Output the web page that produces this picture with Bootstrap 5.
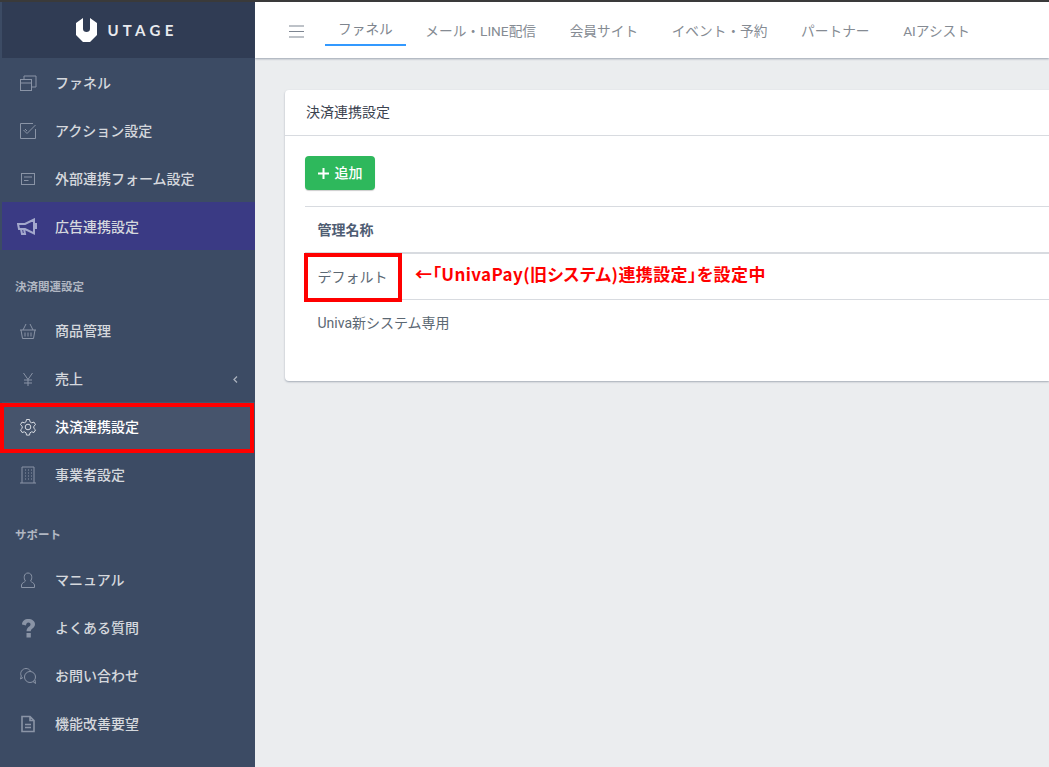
<!DOCTYPE html>
<html lang="ja">
<head>
<meta charset="utf-8">
<title>決済連携設定</title>
<link rel="stylesheet" href="https://cdn.jsdelivr.net/npm/bootstrap@5.3.0/dist/css/bootstrap.min.css">
<style>
html,body{height:100%;overflow:hidden}
body{font-family:"Roboto","Noto Sans CJK JP",sans-serif;background:#ebedef;color:#495057;font-size:14px}
.top-strip{height:2px;background:#3a3a3a}
.app-shell{height:765px}
.side-edge{width:2px;background:#3c4b64}
.side-col{width:253px;background:#3c4b64;color:#d3d6dc}
.brand-box{height:56px;background:#303c54;padding-right:3px}
.brand-word{font-family:"Lato","Liberation Sans",sans-serif;font-weight:700;font-size:15px;letter-spacing:4.3px;color:#e8eaee;margin-left:10px}
.side-link{height:48px;padding-left:17px;padding-top:2px;font-size:14px;font-weight:500;color:#d5d8dd;text-decoration:none}
.side-link .nav-glyph{width:18px;height:18px;margin-right:18px;flex:none;color:#8a94a6}
.side-link.on-ad{background:#3a3a84}
.side-link.on-ad .nav-glyph{color:#a3a8cc;width:20px;margin-left:-2px}
.side-link .nav-glyph.tall{height:20px}
.side-link.on-cur{background:#46546c;color:#fff;position:relative}
.side-link.on-cur .nav-glyph{color:#d7dbe1}
.cur-frame{position:absolute;left:-2px;right:1px;top:1px;bottom:-3px;border:4px solid #f00}
.side-head{height:56px;padding:19px 0 0 13px;font-size:11.5px;font-weight:700;color:#b1b7c2}
.side-head.lower{height:57px}
.chev{margin-left:auto;margin-right:17px;color:#aab1bd;width:5px;height:7px}
.main-col{min-width:0}
.head-bar{height:56px;background:#fff;box-shadow:0 1px 2px rgba(60,75,100,.45);padding-left:34px}
.burger{width:15px;height:13px;margin-right:21px;margin-top:3px;color:#7d8591}
.head-tab{font-size:13.7px;color:#858b93;padding:0 13px;height:32px;display:flex;align-items:center;margin-right:7.6px;text-decoration:none;margin-top:2px}
.head-tab.act{border-bottom:2px solid #39f;color:#7e858e;padding-bottom:3px;margin-top:3px;height:29px;margin-right:6.5px}
.pane{padding:32px 0 0 30px}
.sheet{border:0;border-radius:4px 0 0 4px;box-shadow:0 1px 2px rgba(60,75,100,.4);height:291px;background:#fff}
.sheet-head{height:46px;padding:0 21px;border-bottom:1px solid #d8dbe0;display:flex;align-items:center;color:#3c4350;font-size:14px}
.sheet-body{padding:20px 0 20px 20px}
.btn-add{background:#2eb85c;color:#fff;border:0;font-size:14px;font-weight:500;height:34px;width:70px;padding:0;border-radius:4px;box-shadow:0 1px 1px rgba(0,0,0,.2)}
.btn-add:hover{background:#2eb85c;color:#fff}
.btn-add svg{width:11px;height:11px;margin-right:6px;vertical-align:-1px}
.name-table{margin:16px 0 0;width:100%;font-size:14px;color:#5c6873;border-collapse:collapse}
.name-table th{font-weight:700;height:46px;padding:2px 12.5px 0;border-top:1px solid #d8dbe0;border-bottom:2px solid #d8dbe0;color:#4f5d73;vertical-align:middle}
.name-table td{height:47px;padding:0 12.5px;border-bottom:1px solid #d8dbe0;vertical-align:middle}
.name-table td.cell-mark{padding-top:2px}
.name-table tr:last-child td{border-bottom:0}
.cell-mark{position:relative}
.mark-frame{position:absolute;left:-1px;top:-1px;width:98px;height:49px;border:4px solid #f00}
.note-red{position:absolute;left:110px;top:10px;white-space:nowrap;color:#f00;font-size:17px;font-weight:700;letter-spacing:.4px;font-feature-settings:"palt";font-family:"Noto Sans CJK JP",sans-serif;line-height:20px}
</style>
</head>
<body>
<div class="top-strip"></div>
<div class="d-flex app-shell">
  <div class="side-edge"></div>
  <nav class="side-col d-flex flex-column flex-shrink-0">
    <div class="brand-box d-flex align-items-center justify-content-center">
      <svg width="21" height="24" viewBox="0 0 21 24"><path fill="#fff" d="M7 0 0 5v12l7 7h7l7-7V5l-7-5v11c0 2-1.500 3-3.500 3S7 13 7 11z"/></svg>
      <span class="brand-word">UTAGE</span>
    </div>
    <a class="side-link d-flex align-items-center"><svg class="nav-glyph" viewBox="0 0 18 18" fill="none" stroke="currentColor"><rect x="1.500" y="5.500" width="11" height="11"/><path d="M1.500 9h11M5 5.500V2h12v11h-4.500M5 5.500h7.500"/></svg>ファネル</a>
    <a class="side-link d-flex align-items-center"><svg class="nav-glyph" viewBox="0 0 18 18" fill="none" stroke="currentColor"><path d="M16.500 7v9.500h-15v-15H14"/><path d="m4.500 8 3.500 3.500L16.500 3M6 7l2 2"/></svg>アクション設定</a>
    <a class="side-link d-flex align-items-center"><svg class="nav-glyph" viewBox="0 0 18 18" fill="none" stroke="currentColor"><rect x="2.500" y="3.500" width="13" height="11"/><path d="M5 7h8M5 10.500h4.500"/></svg>外部連携フォーム設定</a>
    <a class="side-link on-ad d-flex align-items-center"><svg class="nav-glyph" viewBox="0 0 20 18" fill="none" stroke="currentColor" stroke-width="2"><path d="M1 6h7l9-4.500v14L8 11H2zM4 11l1 5h3l-1-5M17 6h2v4h-2"/></svg>広告連携設定</a>
    <div class="side-head d-flex align-items-center">決済関連設定</div>
    <a class="side-link d-flex align-items-center"><svg class="nav-glyph" viewBox="0 0 18 18" fill="none" stroke="currentColor"><path d="M1 8h16M2 8l1.500 8.500h11L16 8M4 8l3-6M14 8l-3-6M6 10.500v4M9 10.500v4M12 10.500v4"/></svg>商品管理</a>
    <a class="side-link d-flex align-items-center"><svg class="nav-glyph" viewBox="0 0 18 18" fill="none" stroke="currentColor"><path d="m4.500 3 4.500 6.500L13.500 3M9 9.500V16M5 10h8M5 13h8"/></svg>売上<svg class="chev" viewBox="0 0 5 7" fill="none" stroke="currentColor" stroke-width="1.300"><path d="M4 .5 1 3.500l3 3"/></svg></a>
    <a class="side-link on-cur d-flex align-items-center"><svg class="nav-glyph" viewBox="0 0 18 18" fill="none" stroke="currentColor"><path d="M7.500 1.500h3l.5 2.300 1.700 1 2.300-.7 1.500 2.600-1.700 1.600v2l1.700 1.600-1.500 2.600-2.300-.7-1.700 1-.5 2.300h-3l-.5-2.300-1.700-1-2.300.7-1.500-2.600 1.700-1.600v-2L1.500 6.700 3 4.100l2.300.7 1.700-1z"/><circle cx="9" cy="9" r="2.800"/></svg>決済連携設定<span class="cur-frame"></span></a>
    <a class="side-link d-flex align-items-center"><svg class="nav-glyph" viewBox="0 0 18 18" fill="none" stroke="currentColor"><path d="M3 17V1h12v16M1 17h16M6 4h1M9 4h1M12 4h1M6 7h1M9 7h1M12 7h1M6 10h1M9 10h1M12 10h1M6 13h1M9 13h1M12 13h1"/></svg>事業者設定</a>
    <div class="side-head lower d-flex align-items-center">サポート</div>
    <a class="side-link d-flex align-items-center"><svg class="nav-glyph" viewBox="0 0 18 18" fill="none" stroke="currentColor"><path d="M2.500 16.500h13v-2.500c0-2-3.500-3-4-4 2-2 2-8-2.500-8s-4.500 6-2.500 8c-.5 1-4 2-4 4z"/></svg>マニュアル</a>
    <a class="side-link d-flex align-items-center"><svg class="nav-glyph tall" viewBox="0 0 18 20" fill="currentColor"><path d="M3 6.500C3 3 5.800 1 9.300 1 13 1 16 3 16 6.300c0 4-4.200 4-4.200 7H7.500c0-4.500 4-4.500 4-6.800 0-1.200-.9-1.900-2.100-1.900-1.400 0-2.200 1-2.400 2.900zM7.500 15h4.300v4.500H7.500z"/></svg>よくある質問</a>
    <a class="side-link d-flex align-items-center"><svg class="nav-glyph" viewBox="0 0 18 18" fill="none" stroke="currentColor"><path d="M4 10.500 1.500 12l.8-3C.5 6 3 1.500 7 1.500c2 0 3.500 1 4.500 2.500"/><circle cx="11" cy="10" r="5.500"/><path d="m14 14.500 2.500 2-.5-3.500"/></svg>お問い合わせ</a>
    <a class="side-link d-flex align-items-center"><svg class="nav-glyph" viewBox="0 0 18 18" fill="none" stroke="currentColor" stroke-width="1.600"><path d="M3 1.500h8l4 4v11H3zM11 1.500v4h4M6 9.500h6M6 12.500h6"/></svg>機能改善要望</a>
  </nav>
  <main class="main-col flex-grow-1">
    <header class="head-bar d-flex align-items-center">
      <svg class="burger" viewBox="0 0 15 13" fill="none" stroke="currentColor"><path d="M0 1h15M0 6.500h15M0 12h15"/></svg>
      <a class="head-tab act">ファネル</a>
      <a class="head-tab">メール・LINE配信</a>
      <a class="head-tab">会員サイト</a>
      <a class="head-tab">イベント・予約</a>
      <a class="head-tab">パートナー</a>
      <a class="head-tab">AIアシスト</a>
    </header>
    <div class="pane">
      <section class="sheet card">
        <div class="sheet-head">決済連携設定</div>
        <div class="sheet-body">
          <button class="btn btn-add" type="button"><svg viewBox="0 0 11 11" fill="none" stroke="currentColor" stroke-width="2"><path d="M5.500 0v11M0 5.500h11"/></svg>追加</button>
          <table class="name-table">
            <thead><tr><th>管理名称</th></tr></thead>
            <tbody>
              <tr><td class="cell-mark">デフォルト<span class="mark-frame"></span><span class="note-red">←「UnivaPay(旧システム)連携設定」を設定中</span></td></tr>
              <tr><td>Univa新システム専用</td></tr>
            </tbody>
          </table>
        </div>
      </section>
    </div>
  </main>
</div>
<script src="https://cdn.jsdelivr.net/npm/bootstrap@5.3.0/dist/js/bootstrap.bundle.min.js"></script>
</body>
</html>
